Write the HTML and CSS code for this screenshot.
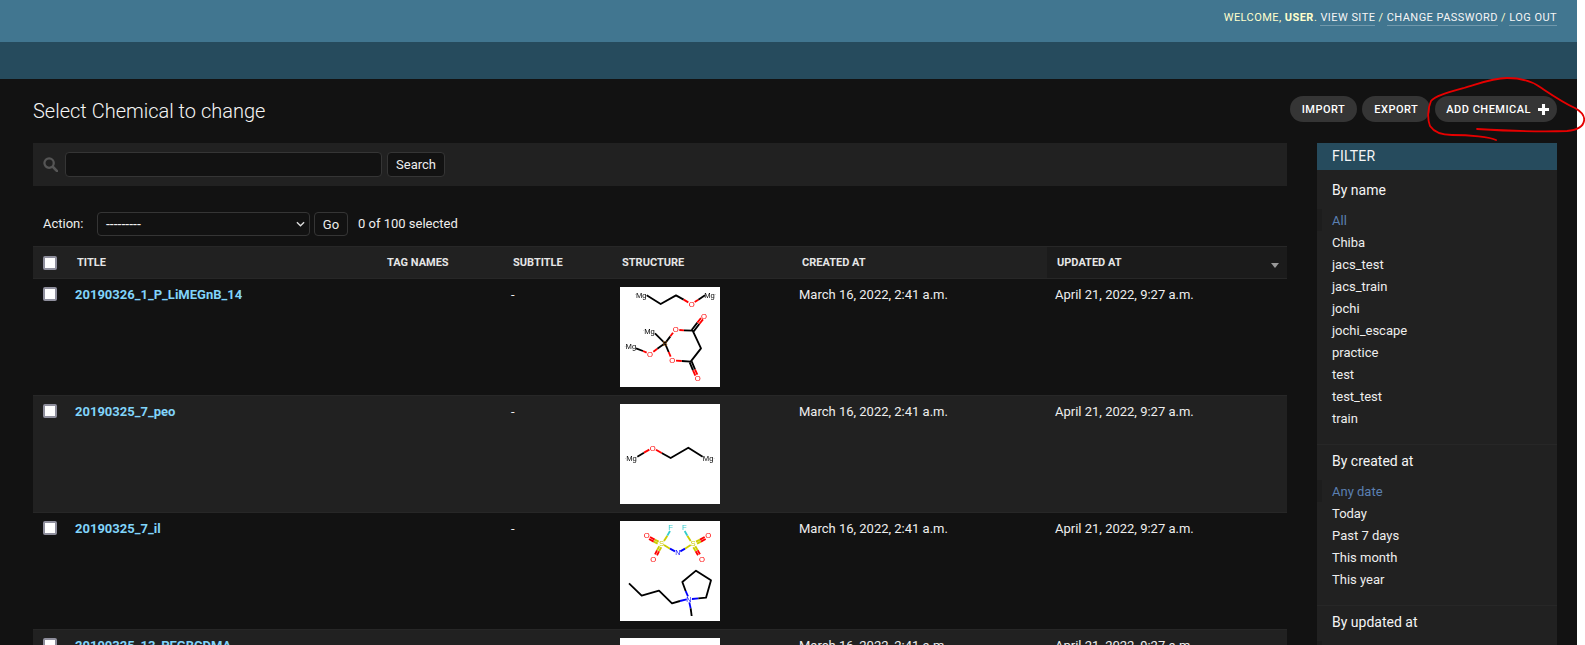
FILE: index.html
```html
<!DOCTYPE html>
<html lang="en">
<head>
<meta charset="utf-8">
<title>Select Chemical to change</title>
<link rel="stylesheet" href="styles.css">
</head>
<body>
<div class="page">
  <header class="top">
    <div class="userlinks">Welcome, <strong>user</strong>. <a href="#">View site</a> / <a href="#">Change password</a> / <a href="#">Log out</a></div>
  </header>
  <div class="crumbs"></div>
  <main class="content">
    <div class="titlebar">
      <h1>Select Chemical to change</h1>
      <div class="tools">
        <a class="tool" href="#">Import</a>
        <a class="tool" href="#">Export</a>
        <a class="tool tool-add" href="#">Add Chemical
          <svg class="plus" viewBox="0 0 10 10" width="11" height="11"><path d="M3.6 0h2.8v3.6H10v2.8H6.4V10H3.6V6.4H0V3.6h3.6z" fill="#fff"/></svg>
        </a>
      </div>
    </div>
    <div class="columns">
      <div class="results">
        <div class="searchbar">
          <svg class="searchicon" viewBox="0 0 16 16" width="15" height="15"><circle cx="6.5" cy="6.5" r="5" fill="none" stroke="#555" stroke-width="2.4"/><path d="M10.4 10.4 15 15" stroke="#555" stroke-width="2.8" stroke-linecap="round"/></svg>
          <input class="searchinput" type="text">
          <button class="btn btn-search" type="button">Search</button>
        </div>
        <div class="actions">
          <span class="action-label">Action:</span>
          <div class="fakeselect"><span class="dashes">---------</span>
            <svg viewBox="0 0 10 6" width="9" height="6"><path d="M1 1l4 4 4-4" fill="none" stroke="#ddd" stroke-width="1.5"/></svg>
          </div>
          <button class="btn btn-go" type="button">Go</button>
          <span class="counter">0 of 100 selected</span>
        </div>
        <table class="list">
          <colgroup>
            <col class="c-check"><col class="c-title"><col class="c-tag"><col class="c-sub"><col class="c-struct"><col class="c-created"><col class="c-updated">
          </colgroup>
          <thead>
            <tr>
              <th class="check"><span class="box"></span></th>
              <th>Title</th>
              <th>Tag names</th>
              <th>Subtitle</th>
              <th>Structure</th>
              <th>Created at</th>
              <th class="sorted">Updated at<span class="sortarrow"></span></th>
            </tr>
          </thead>
          <tbody>
            <tr>
              <td class="check"><span class="box"></span></td>
              <td class="name"><a href="#">20190326_1_P_LiMEGnB_14</a></td>
              <td></td>
              <td>-</td>
              <td>
                <svg class="mol" viewBox="0 0 300 300">
                  <g class="bond">
                    <path d="M80 25 122 51 168 25 191 38"/>
                    <path d="M235 38 255 25"/>
                    <path d="M105 139 135 169"/>
                    <path d="M48 184 69 192"/>
                    <path d="M135 169 112 185"/>
                    <path d="M135 169 151 148"/>
                    <path d="M135 169 146 195"/>
                    <path d="M192 130 218 131 243 184 212 224 185 222"/>
                    <path d="M215 129 232 107M221 133 238 111"/>
                    <path d="M209 226 219 250M215 223 225 247"/>
                  </g>
                  <g class="bond-red">
                    <path d="M191 38 205 46"/>
                    <path d="M224 45 235 38"/>
                    <path d="M69 192 80 197"/>
                    <path d="M100 194 112 185"/>
                    <path d="M151 148 159 137"/>
                    <path d="M146 195 152 209"/>
                    <path d="M178 129 192 130"/>
                    <path d="M168 221 185 222"/>
                    <path d="M232 107 243 93M238 111 249 97"/>
                    <path d="M219 250 226 266M225 247 232 263"/>
                  </g>
                  <g class="atom">
                    <text x="62" y="25"><tspan class="dot">·</tspan>Mg</text>
                    <text x="270" y="25">Mg<tspan class="dot">·</tspan></text>
                    <text x="87" y="132"><tspan class="dot">·</tspan>Mg</text>
                    <text x="31" y="179"><tspan class="dot">·</tspan>Mg</text>
                  </g>
                  <g class="atom red">
                    <text x="215" y="51">O</text><text x="90" y="201">O</text>
                    <text x="167" y="128">O</text><text x="157" y="220">O</text>
                    <text x="252" y="89">O</text><text x="233" y="274">O</text>
                  </g>
                  <g class="atom boron"><text x="135" y="169">B</text></g>
                </svg>
              </td>
              <td class="date">March 16, 2022, 2:41 a.m.</td>
              <td class="date">April 21, 2022, 9:27 a.m.</td>
            </tr>
            <tr class="alt">
              <td class="check"><span class="box"></span></td>
              <td class="name"><a href="#">20190325_7_peo</a></td>
              <td></td>
              <td>-</td>
              <td>
                <svg class="mol" viewBox="0 0 300 300">
                  <g class="bond">
                    <path d="M52 158 72 146"/>
                    <path d="M125 147 152 162 205 131 248 158"/>
                  </g>
                  <g class="bond-red">
                    <path d="M72 146 88 137"/>
                    <path d="M108 137 125 147"/>
                  </g>
                  <g class="atom">
                    <text x="33" y="164"><tspan class="dot">·</tspan>Mg</text>
                    <text x="266" y="164">Mg<tspan class="dot">·</tspan></text>
                  </g>
                  <g class="atom red"><text x="98" y="132">O</text></g>
                </svg>
              </td>
              <td class="date">March 16, 2022, 2:41 a.m.</td>
              <td class="date">April 21, 2022, 9:27 a.m.</td>
            </tr>
            <tr>
              <td class="check"><span class="box"></span></td>
              <td class="name"><a href="#">20190325_7_il</a></td>
              <td></td>
              <td>-</td>
              <td>
                <svg class="mol" viewBox="0 0 300 300">
                  <g class="bond-yellow">
                    <path d="M132 60 142 44"/>
                    <path d="M212 60 202 44"/>
                    <path d="M132 72 150 83"/>
                    <path d="M212 72 195 83"/>
                    <path d="M116 62 104 56M113 68 101 62"/>
                    <path d="M118 76 111 88M124 79 117 91"/>
                    <path d="M228 62 240 56M231 68 243 62"/>
                    <path d="M226 76 233 88M220 79 227 91"/>
                  </g>
                  <g class="bond-red">
                    <path d="M104 56 90 48M101 62 87 54"/>
                    <path d="M111 88 105 100M117 91 111 103"/>
                    <path d="M240 56 254 48M243 62 257 54"/>
                    <path d="M233 88 240 100M227 91 234 103"/>
                  </g>
                  <g class="bond-cyan">
                    <path d="M142 44 150 30"/>
                    <path d="M202 44 194 30"/>
                  </g>
                  <g class="bond-blue">
                    <path d="M150 83 165 91"/>
                    <path d="M195 83 181 91"/>
                    <path d="M180 240 200 235"/>
                    <path d="M197 210 204 226"/>
                    <path d="M216 234 235 232"/>
                    <path d="M208 244 212 262"/>
                  </g>
                  <g class="bond">
                    <path d="M27 187 65 224 117 209 156 247 180 240"/>
                    <path d="M197 210 187 183 228 149 273 178 258 230 235 232"/>
                    <path d="M212 262 215 285"/>
                  </g>
                  <g class="atom cyan">
                    <text x="152" y="20">F</text><text x="193" y="20">F</text>
                  </g>
                  <g class="atom yellow">
                    <text x="125" y="67">S</text><text x="219" y="67">S</text>
                  </g>
                  <g class="atom red">
                    <text x="80" y="42">O</text><text x="100" y="114">O</text>
                    <text x="265" y="42">O</text><text x="246" y="114">O</text>
                  </g>
                  <g class="atom blue">
                    <text x="173" y="95">N</text><text x="210" y="234">N<tspan class="sup" dy="-4">+</tspan></text>
                  </g>
                </svg>
              </td>
              <td class="date">March 16, 2022, 2:41 a.m.</td>
              <td class="date">April 21, 2022, 9:27 a.m.</td>
            </tr>
            <tr class="alt">
              <td class="check"><span class="box"></span></td>
              <td class="name"><a href="#">20190325_13_PEGBCDMA</a></td>
              <td></td>
              <td>-</td>
              <td><svg class="mol" viewBox="0 0 300 300"></svg></td>
              <td class="date">March 16, 2022, 2:41 a.m.</td>
              <td class="date">April 21, 2022, 9:27 a.m.</td>
            </tr>
          </tbody>
        </table>
      </div>
      <aside class="filter">
        <h2>Filter</h2>
        <section class="fgroup">
          <h3>By name</h3>
          <ul>
            <li class="on"><a href="#">All</a></li>
            <li><a href="#">Chiba</a></li>
            <li><a href="#">jacs_test</a></li>
            <li><a href="#">jacs_train</a></li>
            <li><a href="#">jochi</a></li>
            <li><a href="#">jochi_escape</a></li>
            <li><a href="#">practice</a></li>
            <li><a href="#">test</a></li>
            <li><a href="#">test_test</a></li>
            <li><a href="#">train</a></li>
          </ul>
        </section>
        <section class="fgroup">
          <h3>By created at</h3>
          <ul>
            <li class="on"><a href="#">Any date</a></li>
            <li><a href="#">Today</a></li>
            <li><a href="#">Past 7 days</a></li>
            <li><a href="#">This month</a></li>
            <li><a href="#">This year</a></li>
          </ul>
        </section>
        <section class="fgroup">
          <h3>By updated at</h3>
          <ul>
            <li class="on"><a href="#">Any date</a></li>
          </ul>
        </section>
      </aside>
    </div>
  </main>
</div>
<svg class="scribble" viewBox="0 0 1585 645" width="1585" height="645">
  <path d="M1496 140C1490 137 1470 135 1452 135C1442 135 1434 132 1430 126C1427 119 1428 108 1431 101C1435 96 1446 93 1464 88C1478 84 1492 78 1507 78C1520 78 1530 80 1540 87C1552 95 1562 102 1575 108C1582 112 1585 116 1584 121C1583 127 1578 130 1567 131C1545 132 1510 131 1477 129"/>
</svg>
</body>
</html>
```
FILE: styles.css
```css
* { box-sizing: border-box; }
html, body { margin: 0; height: 645px; overflow: hidden; background: #fff; }
body { position: relative; font-family: Roboto, "Liberation Sans", sans-serif; font-size: 13px; color: #eee; }
a { color: inherit; text-decoration: none; }

.page { width: 1577px; height: 645px; background: #121212; overflow: hidden; }

.top { height: 42px; background: #417690; display: flex; justify-content: flex-end; padding: 11px 20px 0 0; }
.userlinks { font-size: 11px; line-height: 14px; letter-spacing: 0.45px; text-transform: uppercase; font-weight: 400; color: #ffc; }
.userlinks strong { font-weight: 700; }
.userlinks a { border-bottom: 1px solid rgba(255,255,255,0.25); color: #f5f5f5; padding-bottom: 1px; }

.crumbs { height: 37px; background: #264b5d; }

.content { padding: 17px 20px 0 33px; }

.titlebar { display: flex; justify-content: space-between; align-items: flex-start; height: 47px; }
h1 { margin: 3px 0 0; font-size: 20px; line-height: 24px; font-weight: 300; color: #f5f5f5; }
.tools { display: flex; gap: 5px; }
.tool { height: 26px; border-radius: 13px; background: #353535; color: #fff; padding: 0 12px; display: flex; align-items: center; gap: 7px; font-size: 11px; letter-spacing: 0.5px; text-transform: uppercase; font-weight: 500; }
.tool-add { padding: 0 8px 0 11px; }
.plus { display: block; }

.columns { display: flex; justify-content: space-between; align-items: flex-start; }
.results { width: 1254px; }

.searchbar { height: 43px; background: #212121; display: flex; align-items: center; padding: 0 0 0 10px; gap: 5px; margin-bottom: 26px; }
.searchicon { margin-right: 2px; display: block; }
.searchinput { width: 317px; height: 25px; background: #121212; border: 1px solid #353535; border-radius: 4px; padding: 0; margin: 0; }
.btn { height: 25px; background: #121212; color: #eee; border: 1px solid #353535; border-radius: 4px; font: 13px Roboto, sans-serif; padding: 0; }
.btn-search { width: 58px; }
.btn-go { width: 34px; height: 24px; }

.actions { height: 24px; display: flex; align-items: center; padding-left: 10px; margin-bottom: 10px; }
.action-label { width: 54px; padding-bottom: 2px; }
.fakeselect { width: 213px; height: 24px; background: #121212; border: 1px solid #353535; border-radius: 4px; display: flex; align-items: center; justify-content: space-between; padding: 0 4px 0 8px; margin-right: 4px; }
.dashes { font-size: 14px; }
.counter { margin-left: 10px; padding-bottom: 2px; }

.list { width: 1254px; table-layout: fixed; border-collapse: collapse; }
.c-check { width: 32px; }
.c-title { width: 310px; }
.c-tag { width: 126px; }
.c-sub { width: 109px; }
.c-struct { width: 180px; }
.c-created { width: 257px; }
.c-updated { width: 240px; }

th { height: 32px; background: #212121; padding: 0 0 0 12px; text-align: left; font-size: 11px; font-weight: 700; text-transform: uppercase; color: #e6e6e6; border-top: 1px solid #272727; border-bottom: 1px solid #272727; position: relative; }
th.sorted { background: #1b1b1b; padding-left: 10px; }
th.check, td.check { padding: 0 0 0 10px; }
.sortarrow { position: absolute; right: 8px; top: 16px; width: 0; height: 0; border-left: 4px solid transparent; border-right: 4px solid transparent; border-top: 5px solid #999; }

td { padding: 8px 10px; vertical-align: top; line-height: 16px; height: 117px; border-bottom: 1px solid #272727; color: #eee; }
td.date { padding-left: 9px; }
td.date:last-child { padding-left: 8px; }
tr.alt td { background: #212121; }
td.name { font-weight: 700; padding-left: 10px; color: #81d4fa; }
td.check { padding-top: 8px; }

.box { display: block; width: 14px; height: 14px; background: #fff; border: 2px solid #8f8f9d; border-radius: 2px; }

.mol { display: block; width: 100px; height: 100px; background: #fff; filter: blur(0.4px); }
.bond, .bond-red, .bond-yellow, .bond-cyan, .bond-blue { fill: none; stroke-width: 5.5; stroke-linejoin: round; }
.bond { stroke: #000; }
.bond-red { stroke: #f00; }
.bond-yellow { stroke: #cccc00; }
.bond-cyan { stroke: #33cccc; }
.bond-blue { stroke: #0000ff; }
.atom text { font-family: "Liberation Sans", sans-serif; font-size: 23px; fill: #000; text-anchor: middle; dominant-baseline: central; }
.red text { fill: #f00; }
.cyan text { fill: #33cccc; }
.yellow text { fill: #cccc00; }
.blue text { fill: #0000ff; font-size: 21px; }
.boron text { fill: #7f4c19; }
.sup { font-size: 12px; }
.dot { font-size: 10px; }

.filter { width: 240px; background: #212121; }
.filter h2 { margin: 0; height: 27px; background: #264b5d; color: #f5f5f5; font-size: 14px; line-height: 27px; font-weight: 400; text-transform: uppercase; padding-left: 15px; letter-spacing: 0.2px; }
.fgroup { border-bottom: 1px solid #272727; padding-bottom: 15px; }
.fgroup h3 { margin: 0 0 10px; padding: 8px 0 0 15px; font-size: 14px; line-height: 17px; font-weight: 400; color: #f5f5f5; }
.fgroup:first-of-type h3 { padding-top: 12px; }
.fgroup ul { list-style: none; margin: 0; padding: 0; }
.fgroup li { height: 22px; line-height: 24px; padding-left: 15px; color: #eee; }
.fgroup li.on { border-left: 5px solid #1d1d1d; padding-left: 10px; color: #5b80b2; }

.scribble { position: absolute; left: 0; top: 0; pointer-events: none; fill: none; stroke: #e60000; stroke-width: 1.8; stroke-linecap: round; stroke-linejoin: round; }
```
